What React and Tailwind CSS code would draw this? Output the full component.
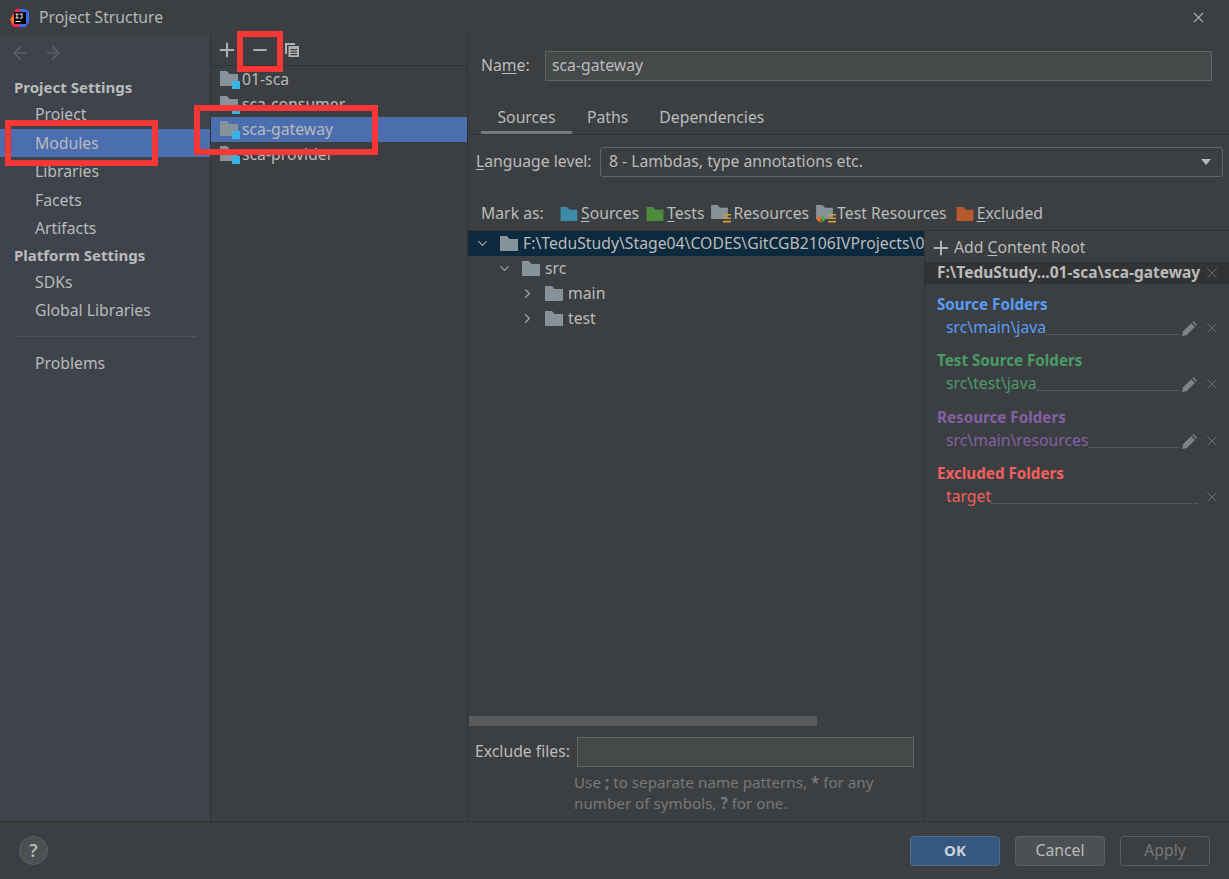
import React from 'react';
import { ChevronDown, ChevronRight, ArrowLeft, ArrowRight, Plus, Minus, X } from 'lucide-react';

const FolderShape = ({ className }) => (
  <svg viewBox="0 0 18 15" className={className} fill="currentColor">
    <path d="M0 0h7l2.5 3H18v12H0z" />
  </svg>
);

const ModuleIcon = () => (
  <span className="relative block w-[19px] h-[17px] shrink-0">
    <FolderShape className="w-[18px] h-[15px] text-[#87939a]" />
    <span className="absolute right-[-1px] bottom-[-1px] w-[8px] h-[8px] bg-[#3ab2e4]" />
  </span>
);

const StackLines = () => (
  <svg viewBox="0 0 8 9" className="absolute right-0 bottom-0 w-[8px] h-[9px]" fill="#d49a3a">
    <path d="M0 0h8v1.6H0zM0 3.4h8V5H0zM0 6.8h8v1.6H0z" />
  </svg>
);

const Pencil = () => (
  <svg viewBox="0 0 14 14" className="w-[15px] h-[15px] text-[#7f8385]" fill="currentColor">
    <path d="M0 14l1-4.500L8.500 2l3.500 3.500L4.500 13zM9.500 1l1-1L14 3.500l-1 1z" />
  </svg>
);

const SideItem = ({ label, active }) => (
  <div className={`h-[28.5px] flex items-center pl-[35px] pt-[2px] ${active ? 'bg-[#4b6eaf]' : ''}`}>{label}</div>
);

const ModuleRow = ({ label, active }) => (
  <div className={`h-[25px] flex items-center gap-[3px] pl-[9px] ${active ? 'bg-[#4b6eaf]' : ''}`}>
    <ModuleIcon />
    <span>{label}</span>
  </div>
);

const TreeRow = ({ indent, open, label, active }) => (
  <div className={`h-[25px] flex items-center whitespace-nowrap overflow-hidden ${active ? 'bg-[#0d293e]' : ''} ${indent}`}>
    {open ? <ChevronDown className="w-[15px] h-[15px] shrink-0 text-[#a0a4a6]" /> : <ChevronRight className="w-[15px] h-[15px] shrink-0 text-[#a0a4a6]" />}
    <FolderShape className="w-[18px] h-[15px] shrink-0 text-[#87939a] ml-[10px] mr-[5px]" />
    <span>{label}</span>
  </div>
);

const FolderGroup = ({ title, path, color, edit, className }) => (
  <div className={className} style={{ color }}>
    <div className="h-[20px] leading-[20px] pl-[12px] font-bold text-[15.2px]">{title}</div>
    <div className="h-[26px] flex items-center pl-[21px] pr-[8px] pt-[2px]">
      <span>{path}</span>
      <span className="flex-1 self-end mb-[5px] border-b border-dotted border-[#6b6f71]" />
      {edit && <span className="ml-[3px] w-[16px]"><Pencil /></span>}
      <X className="w-[18px] h-[18px] ml-[5px] text-[#6f7375]" strokeWidth={1.2} />
    </div>
  </div>
);

const RedBox = ({ className }) => (
  <div className={`absolute border-[6px] border-[#f93636] pointer-events-none ${className}`} />
);

export default function App() {
  return (
    <div className="relative w-[1229px] h-[879px] overflow-hidden flex flex-col bg-[#3c3f41] text-[#bbbbbb] text-[15.75px] font-['Noto_Sans',sans-serif]">
      {/* title bar */}
      <div className="h-[35px] shrink-0 flex items-center pl-[10px] pr-[22px] text-[#b4b8ba]">
        <svg viewBox="0 0 20 20" className="w-[20px] h-[20px] mr-[9px]">
          <path d="M1 9l5-8h8l5 3v10l-4 5H4l-3-3z" fill="#fe2857" />
          <path d="M10 1h5l4 3v10l-4 5h-5z" fill="#3b6df0" />
          <path d="M0 11l4-3 2 6-4 1z" fill="#f97a12" />
          <rect x="4" y="4" width="12" height="12" fill="#000" />
          <rect x="5.5" y="13" width="5" height="1" fill="#fff" />
          <path d="M5.5 5.5h3v.9h-1v3.2h1v.9h-3v-.9h1V6.4h-1zM9.5 5.5h3v3.8c0 1-.6 1.4-1.6 1.4-.7 0-1.200-.3-1.500-.7l.6-.6c.2.300.5.400.8.400.500 0 .7-.2.700-.6V6.400h-2z" fill="#fff" />
        </svg>
        <span>Project Structure</span>
        <X className="w-[17px] h-[17px] ml-auto text-[#a9adaf]" strokeWidth={1.5} />
      </div>

      {/* body */}
      <div className="flex-1 min-h-0 flex">
        <div className="w-[211px] shrink-0 bg-[#3e434c] border-r border-[#323232]">
          <div className="h-[35px] flex items-center pl-[10px] gap-[13px] text-[#5b6066]">
            <ArrowLeft className="w-[20px] h-[20px]" />
            <ArrowRight className="w-[20px] h-[20px]" />
          </div>
          <div className="h-[30px] flex items-end pb-[2px] pl-[14px] font-bold text-[15px]">Project Settings</div>
          <SideItem label="Project" />
          <SideItem label="Modules" active />
          <SideItem label="Libraries" />
          <SideItem label="Facets" />
          <SideItem label="Artifacts" />
          <div className="h-[25px] flex items-center pl-[14px] font-bold text-[15px]">Platform Settings</div>
          <SideItem label="SDKs" />
          <SideItem label="Global Libraries" />
          <div className="mx-[14px] mt-[11px] mb-[12px] border-t border-[#4f545c]" />
          <SideItem label="Problems" />
        </div>

        <div className="w-[257px] shrink-0 border-r border-[#323232]">
          <div className="h-[31px] mb-[1px] flex items-center border-b border-[#323232] pl-[5px] text-[#afb1b3]">
            <Plus className="w-[22px] h-[22px]" strokeWidth={2.2} />
            <Minus className="w-[20px] h-[20px] ml-[12px]" strokeWidth={2.6} />
            <svg viewBox="0 0 16 16" className="w-[16px] h-[16px] ml-[14px]" fill="currentColor">
              <path d="M1 1h10v2H3v9H1z" />
              <path d="M4.500 4H15v11H4.500zM6.500 7v1.200h6.500V7zm0 2.500v1.200h6.500V9.500zm0 2.500v1.200h6.500V12z" fillRule="evenodd" />
            </svg>
          </div>
          <ModuleRow label="01-sca" />
          <ModuleRow label="sca-consumer" />
          <ModuleRow label="sca-gateway" active />
          <ModuleRow label="sca-provider" />
        </div>

        <div className="flex-1 min-w-0 flex flex-col">
          <div className="h-[61px] shrink-0 flex items-center pl-[13px] pr-[17px]">
            <span className="w-[64px]">Na<u className="underline-offset-2">m</u>e:</span>
            <div className="flex-1 h-[30px] flex items-center px-[6px] bg-[#45494a] border border-[#646464]">sca-gateway</div>
          </div>
          <div className="h-[39px] shrink-0 flex items-end border-b border-[#323232] pl-[13px]">
            <div className="w-[91px] h-[39px] flex items-center justify-center pt-[10px] border-b-[3px] border-[#747a80]">Sources</div>
            <div className="h-[39px] flex items-center pt-[10px] pb-[3px] ml-[15px]">Paths</div>
            <div className="h-[39px] flex items-center pt-[10px] pb-[3px] ml-[31px]">Dependencies</div>
          </div>
          <div className="h-[54px] shrink-0 flex items-center pl-[8px] pr-[6px]">
            <span className="w-[124px]"><u className="underline-offset-2">L</u>anguage level:</span>
            <div className="flex-1 h-[30px] flex items-center pl-[8px] pr-[11px] bg-[#3c3f41] border border-[#646464] rounded-[3px]">
              8 - Lambdas, type annotations etc.
              <svg viewBox="0 0 10 6" className="ml-auto w-[10px] h-[6px]" fill="#b4b8ba"><path d="M0 0h10L5 6z" /></svg>
            </div>
          </div>
          <div className="h-[42px] shrink-0 flex items-center border-b border-[#323232] pl-[13px] pt-[8px] whitespace-nowrap">
            <span className="w-[79px]">Mark as:</span>
            <FolderShape className="w-[18px] h-[14px] text-[#3d8aa8] mr-[3px]" />
            <span><u className="underline-offset-2">S</u>ources</span>
            <FolderShape className="w-[18px] h-[14px] text-[#4f8d3c] ml-[7px] mr-[3px]" />
            <span><u className="underline-offset-2">T</u>ests</span>
            <span className="relative block w-[20px] h-[18px] ml-[7px] mr-[2px]">
              <FolderShape className="w-[17px] h-[14px] text-[#87939a]" />
              <StackLines />
            </span>
            <span>Resources</span>
            <span className="relative block w-[20px] h-[18px] ml-[7px] mr-[1px]">
              <FolderShape className="w-[17px] h-[14px] text-[#87939a]" />
              <StackLines />
              <svg viewBox="0 0 10 8" className="absolute left-0 bottom-0 w-[10px] h-[8px]">
                <path d="M4.500 0v8L0 4z" fill="#ee6c2b" />
                <path d="M5.500 0v8L10 4z" fill="#4ea54a" />
              </svg>
            </span>
            <span>Test Resources</span>
            <FolderShape className="w-[18px] h-[14px] text-[#b65a2e] ml-[9px] mr-[3px]" />
            <span><u className="underline-offset-2">E</u>xcluded</span>
          </div>

          <div className="flex-1 min-h-0 flex">
            <div className="w-[457px] shrink-0 flex flex-col border-r border-[#323232]">
              <div className="flex-1 min-h-0">
                <TreeRow indent="pl-[7px]" open label="F:\TeduStudy\Stage04\CODES\GitCGB2106IVProjects\0" active />
                <TreeRow indent="pl-[29px]" open label="src" />
                <TreeRow indent="pl-[52px]" label="main" />
                <TreeRow indent="pl-[52px]" label="test" />
              </div>
              <div className="h-[10px] w-[348px] ml-[1px] shrink-0 bg-[#595b5d]" />
              <div className="h-[95px] shrink-0 pt-[11px]">
                <div className="flex items-center pl-[7px]">
                  <span className="w-[102px]">Exclude files:</span>
                  <div className="w-[337px] h-[30px] bg-[#45494a] border border-[#646464]" />
                </div>
                <div className="pl-[106px] pt-[5px] text-[15.2px] leading-[21px] text-[#787878]">
                  Use <b>;</b> to separate name patterns, <b>*</b> for any<br />
                  number of symbols, <b>?</b> for one.
                </div>
              </div>
            </div>

            <div className="flex-1 min-w-0">
              <div className="h-[31px] flex items-center pl-[5px] pt-[3px]">
                <Plus className="w-[22px] h-[22px] mr-[2px] text-[#afb1b3]" strokeWidth={2.2} />
                <span>Add <u className="underline-offset-2">C</u>ontent Root</span>
              </div>
              <div className="h-[22px] flex items-center pl-[12px] pr-[8px] bg-[#313335] font-bold text-[15.5px] whitespace-nowrap">
                <span>F:\TeduStudy...01-sca\sca-gateway</span>
                <X className="w-[18px] h-[18px] ml-auto text-[#6f7375]" strokeWidth={1.2} />
              </div>
              <FolderGroup className="mt-[10px]" title="Source Folders" path="src\main\java" color="#589df6" edit />
              <FolderGroup className="mt-[10px]" title="Test Source Folders" path="src\test\java" color="#499c68" edit />
              <FolderGroup className="mt-[11px]" title="Resource Folders" path="src\main\resources" color="#855fa5" edit />
              <FolderGroup className="mt-[10px]" title="Excluded Folders" path="target" color="#f55f5f" />
            </div>
          </div>
        </div>
      </div>

      {/* footer */}
      <div className="h-[58px] shrink-0 flex items-center border-t border-[#323232] pl-[19px] pr-[19px]">
        <div className="w-[29px] h-[29px] rounded-full bg-[#4c5052] border border-[#5e6060] flex items-center justify-center font-semibold text-[18px] text-[#b4b8ba]">?</div>
        <button className="ml-auto w-[90px] h-[30px] rounded-[4px] bg-[#365880] border border-[#4c708c] font-bold text-[15px] text-[#c9d2da]">OK</button>
        <button className="ml-[15px] w-[90px] h-[30px] rounded-[4px] bg-[#4c5052] border border-[#5e6060]">Cancel</button>
        <button className="ml-[15px] w-[90px] h-[30px] rounded-[4px] bg-[#3c3f41] border border-[#5e6060] text-[#777777]">Apply</button>
      </div>

      <RedBox className="left-[5px] top-[120px] w-[153px] h-[46px]" />
      <RedBox className="left-[237px] top-[31px] w-[46px] h-[41px]" />
      <RedBox className="left-[194px] top-[105px] w-[184px] h-[50px]" />
    </div>
  );
}
